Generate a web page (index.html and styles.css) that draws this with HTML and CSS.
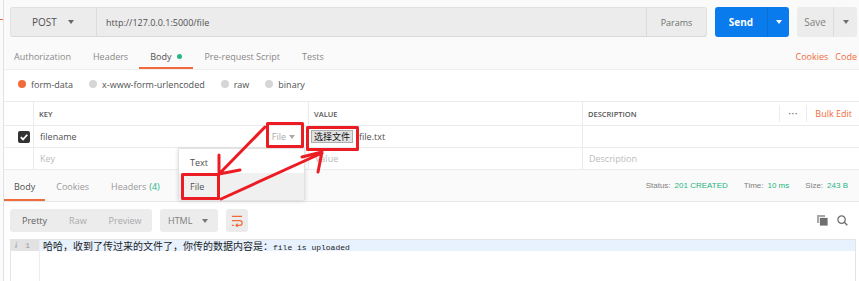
FILE: index.html
```html
<!DOCTYPE html>
<html lang="en">
<head>
  <meta charset="UTF-8">
  <title>Postman - POST file</title>
  <link rel="stylesheet" href="styles.css">
</head>
<body>
<div class="app">
  <div class="edge"></div>
  <div class="main">

    <section class="request">
      <div class="url-row">
        <div class="url-group">
          <div class="method">POST <span class="caret"></span></div>
          <div class="url">http://127.0.0.1:5000/file</div>
          <div class="params">Params</div>
        </div>
        <div class="split send">
          <span class="split-label">Send</span>
          <span class="split-arrow"><span class="caret"></span></span>
        </div>
        <div class="split save">
          <span class="split-label">Save</span>
          <span class="split-arrow"><span class="caret"></span></span>
        </div>
      </div>
      <div class="tabs">
        <span class="tab">Authorization</span>
        <span class="tab">Headers</span>
        <span class="tab active">Body <i class="dot"></i></span>
        <span class="tab">Pre-request Script</span>
        <span class="tab">Tests</span>
        <span class="links"><a>Cookies</a><a>Code</a></span>
      </div>
    </section>

    <div class="body-modes">
      <span class="radio checked">form-data</span>
      <span class="radio">x-www-form-urlencoded</span>
      <span class="radio">raw</span>
      <span class="radio">binary</span>
    </div>

    <div class="kv">
      <div class="cell head"></div>
      <div class="cell head">KEY</div>
      <div class="cell head">VALUE</div>
      <div class="cell head">DESCRIPTION
        <span class="actions"><span class="more">•••</span><a>Bulk Edit</a></span>
      </div>

      <div class="cell check">
        <svg width="12" height="12" viewBox="0 0 12 12"><rect width="12" height="12" rx="2" fill="#333"/><path d="M2.8 6.2 L5 8.4 L9.3 3.7" fill="none" stroke="#fff" stroke-width="1.7"/></svg>
      </div>
      <div class="cell">filename <span class="type">File <span class="caret"></span></span></div>
      <div class="cell file"><span class="file-btn">选择文件</span><span class="file-name">file.txt</span></div>
      <div class="cell"></div>

      <div class="cell"></div>
      <div class="cell placeholder">Key</div>
      <div class="cell placeholder">Value</div>
      <div class="cell placeholder">Description</div>
    </div>

    <section class="response-bar">
      <span class="rtab active">Body</span>
      <span class="rtab">Cookies</span>
      <span class="rtab">Headers <em>(4)</em></span>
      <div class="status">
        <span>Status:</span><b>201 CREATED</b>
        <span>Time:</span><b>10 ms</b>
        <span>Size:</span><b>243 B</b>
      </div>
    </section>

    <div class="toolbar">
      <div class="seg"><span class="on">Pretty</span><span>Raw</span><span>Preview</span></div>
      <div class="lang">HTML <span class="caret"></span></div>
      <div class="wrap">
        <svg width="12" height="12" viewBox="0 0 12 13"><path d="M0.5 1.5 H11.5 M0.5 6 H9 a2.6 2.6 0 0 1 0 5.2 H5 M6.8 9.3 L4.8 11.2 L6.8 13 M0.5 11.2 H2.6" fill="none" stroke="#f26b3a" stroke-width="1.3"/></svg>
      </div>
      <div class="tools">
        <svg width="11" height="11" viewBox="0 0 11 11"><rect x="0" y="0" width="8" height="8" fill="#a8a8a8"/><rect x="2.5" y="2.5" width="8.5" height="8.5" fill="#6f6f6f" stroke="#fff" stroke-width="0.8"/></svg>
        <svg width="11" height="11" viewBox="0 0 11 11"><circle cx="4.6" cy="4.6" r="3.7" fill="none" stroke="#6f6f6f" stroke-width="1.3"/><path d="M7.3 7.3 L10.3 10.3" stroke="#6f6f6f" stroke-width="1.4"/></svg>
      </div>
    </div>

    <div class="editor">
      <div class="line current">
        <span class="gutter"><i>i</i>1</span>
        <span class="code"><span class="cjk">哈哈，收到了传过来的文件了，你传的数据内容是：</span><span class="mono">file is uploaded</span></span>
      </div>
      <div class="rest"><span class="gutter"></span></div>
    </div>
  </div>

  <ul class="type-menu">
    <li>Text</li>
    <li class="hover">File</li>
  </ul>

  <svg class="marks" width="859" height="281" viewBox="0 0 859 281">
    <g fill="none" stroke="#ec1c24" stroke-width="3" stroke-linecap="round" stroke-linejoin="round">
      <rect x="267.5" y="123.5" width="35" height="23"/>
      <rect x="307.5" y="127.5" width="50" height="22"/>
      <rect x="182.5" y="174.5" width="36" height="24"/>
      <path d="M265 127 L220 173 M219 155 L219 174 L240 170"/>
      <path d="M221 199 L322 153 M302 157 L322 152 L318 172"/>
    </g>
  </svg>
</div>
</body>
</html>
```

FILE: styles.css
```css
* {
  box-sizing: border-box;
}

body {
  margin: 0;
  width: 859px;
  height: 281px;
  overflow: hidden;
  background: #fff;
  font-family: "Open Sans", "Noto Sans CJK SC", sans-serif;
  font-size: 9px;
  color: #505050;
}

.app {
  position: relative;
  display: flex;
  height: 281px;
}

.edge {
  width: 4px;
  border-right: 1px solid #e2e2e2;
  background: linear-gradient(#f26b3a, #f26b3a) 0 19px / 3px 1px no-repeat, #fbfbfb;
}

.main {
  flex: 1;
  min-width: 0;
  display: flex;
  flex-direction: column;
}

.caret {
  display: inline-block;
  border-left: 3.5px solid transparent;
  border-right: 3.5px solid transparent;
  border-top: 4px solid currentColor;
}

/* request */

.request {
  background: #fafafa;
  border-bottom: 1px solid #efefef;
  padding: 7px 2px 0 6px;
}

.url-row {
  display: flex;
  height: 30px;
}

.url-group {
  display: flex;
  width: 697px;
  background: #ececec;
  border: 1px solid #e0e0e0;
  border-bottom-color: #d8d8d8;
  border-radius: 3px;
}

.method {
  width: 86px;
  display: flex;
  align-items: center;
  gap: 11px;
  padding-left: 21px;
  font-size: 10px;
  color: #505050;
  border-right: 1px solid #dcdcdc;
}

.method .caret {
  color: #666;
}

.url {
  flex: 1;
  display: flex;
  align-items: center;
  padding-left: 9px;
  color: #505050;
}

.params {
  width: 60px;
  display: flex;
  align-items: center;
  justify-content: center;
  color: #707070;
  border-left: 1px solid #dcdcdc;
}

.split {
  display: flex;
  height: 30px;
  margin-left: 8px;
  border-radius: 3px;
}

.split-label,
.split-arrow {
  display: flex;
  align-items: center;
  justify-content: center;
}

.send {
  width: 74px;
  background: #097bed;
  color: #fff;
  font-size: 10px;
  font-weight: 700;
}

.send .split-label {
  width: 52px;
}

.send .split-arrow {
  flex: 1;
  border-left: 1px solid #0a6ed2;
}

.save {
  width: 60px;
  background: #ececec;
  color: #808080;
  font-size: 10px;
}

.save .split-label {
  width: 36px;
}

.save .split-arrow {
  flex: 1;
  border-left: 1px solid #dcdcdc;
  color: #707070;
}

.tabs {
  display: flex;
  height: 24px;
  margin: 8px 0 0 -7px;
}

.tab {
  display: flex;
  align-items: center;
  padding: 0 11px;
  color: #888;
  border-bottom: 2px solid transparent;
}

.tab.active {
  color: #505050;
  border-bottom-color: #f26b3a;
}

.dot {
  width: 5px;
  height: 5px;
  margin-left: 6px;
  border-radius: 50%;
  background: #26b47f;
}

.links {
  margin-left: auto;
  display: flex;
  align-items: center;
  gap: 7px;
  padding-bottom: 2px;
}

.links a,
.actions a {
  color: #f26b3a;
}

/* body modes */

.body-modes {
  height: 31px;
  display: flex;
  align-items: center;
  padding: 0 0 2px 14px;
}

.radio {
  display: flex;
  align-items: center;
  gap: 5px;
  margin-right: 16px;
}

.radio::before {
  content: "";
  width: 8px;
  height: 8px;
  border-radius: 50%;
  background: #d6d6d6;
  margin-top: -2px;
}

.radio.checked::before {
  background: #f26b3a;
}

/* key / value table */

.kv {
  display: grid;
  grid-template-columns: 29px 275px 274px 1fr;
  grid-template-rows: 24px 22px 22px;
  border-top: 1px solid #ebebeb;
}

.cell {
  display: flex;
  align-items: center;
  padding-left: 6px;
  border-bottom: 1px solid #ebebeb;
}

.cell:not(:nth-child(4n+1)) {
  border-left: 1px solid #ebebeb;
}

.cell.head {
  padding-left: 5px;
  font-size: 7.5px;
  font-weight: 600;
  color: #555;
}

.check {
  padding-left: 14px;
}

.type {
  margin-left: auto;
  margin-right: 13px;
  display: flex;
  align-items: center;
  gap: 3px;
  color: #aaa;
}

.file {
  padding-left: 2px;
}

.file-btn {
  display: inline-flex;
  align-items: center;
  height: 13px;
  padding: 0 2px;
  background: #e1e1e1;
  border: 1px solid #adadad;
  font-family: "Noto Sans CJK SC", sans-serif;
  font-size: 9px;
  color: #111;
}

.file-name {
  margin-left: 6px;
}

.placeholder {
  color: #bbb;
}

.actions {
  margin-left: auto;
  display: flex;
  align-items: center;
  height: 17px;
  font-size: 9px;
  font-weight: 400;
}

.more {
  width: 28px;
  height: 17px;
  display: flex;
  align-items: center;
  justify-content: center;
  border-left: 1px solid #ececec;
  border-right: 1px solid #ececec;
  font-size: 6px;
  letter-spacing: 1px;
  color: #666;
}

.actions a {
  padding: 0 7px 0 8px;
}

/* response */

.response-bar {
  display: flex;
  height: 32px;
  background: #fafafa;
  border-bottom: 1px solid #e8e8e8;
}

.rtab {
  display: flex;
  align-items: center;
  padding: 4px 11px 0;
  color: #999;
  border-bottom: 2px solid transparent;
}

.rtab.active {
  padding: 4px 10px 0;
  color: #505050;
  border-bottom-color: #f26b3a;
}

.rtab em {
  font-style: normal;
  color: #26b47f;
  margin-left: 3px;
}

.status {
  margin-left: auto;
  display: flex;
  align-items: center;
  padding-right: 11px;
  font-family: "Liberation Sans", sans-serif;
  font-size: 8px;
  color: #808080;
}

.status b {
  font-weight: 400;
  color: #26b47f;
  margin: 0 16px 0 4px;
}

.status b:last-child {
  margin-right: 0;
}

.toolbar {
  display: flex;
  height: 23px;
  margin: 7px 0 0 6px;
}

.seg,
.lang,
.wrap {
  display: flex;
  align-items: center;
  background: #ececec;
  border-radius: 3px;
}

.seg {
  width: 142px;
  padding-left: 1px;
}

.seg span {
  padding: 0 11px;
  color: #aaa;
}

.seg .on {
  color: #606060;
}

.lang {
  width: 58px;
  margin-left: 8px;
  padding-left: 8px;
  gap: 10px;
  color: #808080;
}

.lang .caret {
  color: #777;
}

.wrap {
  width: 22px;
  margin-left: 8px;
  justify-content: center;
}

.tools {
  margin-left: auto;
  display: flex;
  align-items: center;
  gap: 9px;
  padding-right: 11px;
}

.editor {
  flex: 1;
  display: flex;
  flex-direction: column;
  margin: 7px 3px 0 6px;
  border: 1px solid #e4e4e4;
  border-bottom: none;
}

.line {
  display: flex;
  height: 11px;
  line-height: 11px;
}

.gutter {
  width: 29px;
  display: flex;
  justify-content: space-between;
  padding: 0 9px 0 4px;
  border-right: 1px solid #ececec;
  font-family: "Liberation Mono", monospace;
  font-size: 8px;
  color: #999;
}

.gutter i {
  font-family: "Liberation Serif", serif;
  font-weight: 700;
  color: #aaa;
}

.current .gutter {
  background: #e2e2e2;
}

.current .code {
  flex: 1;
  padding-left: 3px;
  background: #e8f2fe;
  color: #222;
}

.cjk {
  font-family: "Noto Sans CJK SC", sans-serif;
  font-size: 10px;
}

.mono {
  font-family: "Liberation Mono", monospace;
  font-size: 8px;
}

.rest {
  flex: 1;
  display: flex;
}

/* overlays */

.type-menu {
  position: absolute;
  left: 178px;
  top: 148px;
  width: 127px;
  height: 52px;
  margin: 0;
  padding: 3px 0 0;
  list-style: none;
  background: #fff;
  border: 1px solid #e2e2e2;
  box-shadow: 0 1px 4px rgba(0, 0, 0, 0.15);
}

.type-menu li {
  height: 21px;
  display: flex;
  align-items: center;
  padding-left: 11px;
  color: #505050;
}

.type-menu li.hover {
  height: 27px;
  background: #f0f0f0;
}

.marks {
  position: absolute;
  left: 0;
  top: 0;
  pointer-events: none;
}
```
